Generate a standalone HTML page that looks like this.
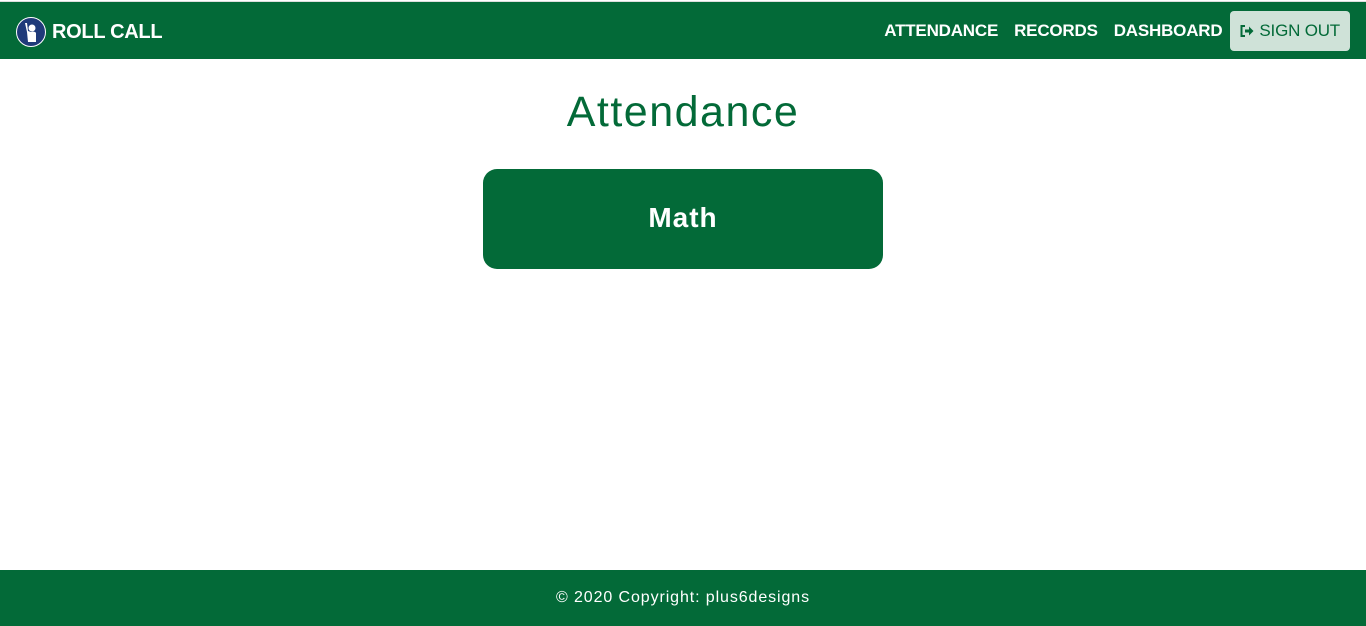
<!DOCTYPE html>
<html><head><style>
body{margin:0;width:1366px;height:626px;position:relative;font-family:"Liberation Sans",sans-serif;background:#fff;overflow:hidden}
.nav{position:absolute;top:1px;left:0;width:1366px;height:58px;background:#036a38;border-top:1px solid #ddd;box-sizing:border-box}
.brand{position:absolute;left:16px;top:15px;display:flex;align-items:center;color:#fff;font-weight:bold;font-size:20px;letter-spacing:-0.3px}
.logo{width:30px;height:30px;border-radius:50%;background:#1f3a7a;border:1px solid #fff;box-sizing:border-box;margin-right:6px;position:relative}
.links{position:absolute;right:16px;top:9px;display:flex;align-items:center;color:#fff;font-weight:bold;font-size:17px;letter-spacing:-0.2px}
.links span{margin-right:16px}
.btn{background:#cfe2d8;color:#036a38;border-radius:4px;padding:10px 10px;font-weight:normal;font-size:17px;height:20px;line-height:20px;display:flex;align-items:center}
h1{position:absolute;top:88px;left:0;width:1366px;text-align:center;margin:0;font-weight:normal;color:#036a38;font-size:43px;letter-spacing:1.5px}
.card{position:absolute;left:483px;top:169px;width:400px;height:100px;background:#036a38;border-radius:14px;color:#fff;font-size:28px;font-weight:bold;text-align:center;line-height:98px;letter-spacing:1px}
.foot{position:absolute;left:0;top:570px;width:1366px;height:56px;background:#036a38;color:#fff;text-align:center;line-height:56px;font-size:16px;letter-spacing:0.9px}
</style></head><body>
<div class="nav">
<div class="brand"><div class="logo"><svg width="28" height="28" viewBox="0 0 28 28"><circle cx="15" cy="10" r="3.5" fill="#fff"/><path d="M8 5 L10 14 L11 24 L19 24 L19 15 Q18 13 14 14 L11 13 L10 5Z" fill="#fff"/></svg></div>ROLL CALL</div>
<div class="links"><span>ATTENDANCE</span><span>RECORDS</span><span style="margin-right:8px">DASHBOARD</span><div class="btn"><svg width="14" height="12" viewBox="0 0 14 12" style="margin-right:5px"><path d="M5 1H1.5V11H5" fill="none" stroke="#036a38" stroke-width="2"/><path d="M5 4.5H9V1.5L13.5 6L9 10.5V7.5H5Z" fill="#036a38"/></svg>SIGN OUT</div></div>
</div>
<h1>Attendance</h1>
<div class="card">Math</div>
<div class="foot">© 2020 Copyright: plus6designs</div>
</body></html>
